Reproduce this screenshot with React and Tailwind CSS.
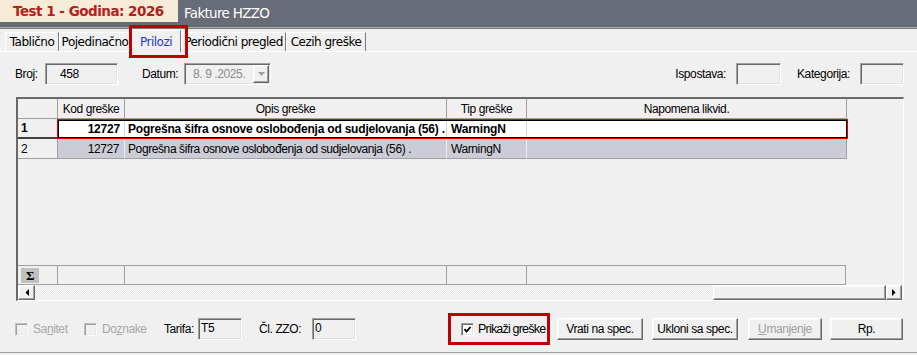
const sunken =
  'border border-t-[#a0a0a0] border-l-[#a0a0a0] border-b-white border-r-white shadow-[inset_1px_1px_0_#696969,inset_-1px_-1px_0_#e3e3e3]';
const raised =
  'border border-t-white border-l-white border-b-[#696969] border-r-[#696969] shadow-[inset_-1px_-1px_0_#a0a0a0,inset_1px_1px_0_#f8f8f8]';

const OPIS = 'Pogrešna šifra osnove oslobođenja od sudjelovanja (56) .';

function CheckBox({ checked, disabled }) {
  return (
    <span
      className={`w-[13px] h-[13px] shrink-0 flex items-center justify-center ${sunken} ${
        disabled ? 'bg-[#f0f0f0] opacity-60' : 'bg-white'
      }`}
    >
      {checked && (
        <svg width="9" height="9" viewBox="0 0 9 9">
          <polyline points="1.5,4 3.5,6.5 7.5,2" fill="none" stroke="#000" strokeWidth="1.8" />
        </svg>
      )}
    </span>
  );
}

function Tab({ w, children }) {
  return (
    <div
      className={`${w} h-[19px] border-t border-l border-r border-t-white border-l-white border-r-[#7a7a7a] flex items-center justify-center whitespace-nowrap`}
    >
      {children}
    </div>
  );
}

function Btn({ w, ml, disabled, children }) {
  return (
    <div
      className={`${w} ${ml} h-[22px] bg-[#f0f0f0] ${raised} flex items-center justify-center ${
        disabled ? 'text-[#a0a0a0]' : 'text-black'
      }`}
    >
      {children}
    </div>
  );
}

function Arrow({ dir }) {
  return (
    <svg width="4" height="7" viewBox="0 0 4 7">
      {dir === 'left' ? <polygon points="4,0 4,7 0.5,3.5" fill="#000" /> : <polygon points="0,0 0,7 3.5,3.5" fill="#000" />}
    </svg>
  );
}

export default function App() {
  return (
    <div className="w-[917px] h-[355px] bg-[#f0f0f0] overflow-hidden text-black">
      {/* Title bar */}
      <div className="h-[27px] bg-[#676c78] flex items-start">
        <div className="w-[178px] h-[22px] bg-[#f6ebd7] pl-[13px] flex items-center font-['DejaVu_Sans',sans-serif] font-bold text-[13.5px] tracking-[-0.5px] text-[#b5211b]">
          Test 1 - Godina: 2026
        </div>
        <div className="h-[26px] pl-[6px] flex items-center font-['DejaVu_Sans',sans-serif] text-[13.5px] tracking-[-0.7px] text-white">
          Fakture HZZO
        </div>
      </div>
      <div className="h-px bg-[#a9a9a9]" />
      <div className="h-px bg-[#7d7d7d]" />

      {/* Tabs */}
      <div className="h-[23px] flex items-end pl-[5px] border-b border-white font-['DejaVu_Sans',sans-serif] text-[12px] tracking-[-0.5px]">
        <Tab w="w-[54px]">Tablično</Tab>
        <Tab w="w-[72px]">Pojedinačno</Tab>
        <div className="relative z-10 w-[50px] h-[22px] -mb-px bg-[#f0f0f0] border-t border-l border-r border-t-white border-l-white border-r-[#7a7a7a] flex items-start justify-center pt-[2px] text-[#2a36c8]">
          Prilozi
          <div className="absolute left-[-3px] top-[-6px] w-[59px] h-[33px] border-[3px] border-[#c00000]" />
        </div>
        <Tab w="w-[105px]">Periodični pregled</Tab>
        <Tab w="w-[80px]">Cezih greške</Tab>
      </div>

      {/* Panel */}
      <div className="h-[301px] border-b border-[#a0a0a0] flex flex-col font-['Liberation_Sans',Arial,sans-serif] text-[12px] tracking-[-0.4px]">
        {/* Top fields */}
        <div className="mt-[11px] h-[22px] flex items-center">
          <span className="ml-[15px] w-[30px]">Broj:</span>
          <div className={`w-[73px] h-[22px] ${sunken} pl-[14px] flex items-center`}>458</div>
          <span className="ml-[24px] w-[42px]">Datum:</span>
          <div className={`w-[87px] h-[22px] ${sunken} pl-[8px] pr-[1px] flex items-center justify-between text-[#8a8a8a]`}>
            <span>8. 9 .2025.</span>
            <div className={`w-[16px] h-[18px] bg-[#f0f0f0] ${raised} flex items-center justify-center`}>
              <svg width="7" height="4" viewBox="0 0 7 4">
                <polygon points="0,0 7,0 3.5,4" fill="#a0a0a0" />
              </svg>
            </div>
          </div>
          <div className="flex-1" />
          <span>Ispostava:</span>
          <div className={`ml-[10px] w-[45px] h-[22px] ${sunken}`} />
          <span className="ml-[16px]">Kategorija:</span>
          <div className={`ml-[10px] w-[44px] h-[22px] mr-[13px] ${sunken}`} />
        </div>

        {/* Grid */}
        <div className="mt-[12px] ml-[16px] w-[888px] h-[204px] border-t-2 border-l-2 border-t-[#696969] border-l-[#696969] border-r border-b border-r-white border-b-white flex flex-col">
          {/* Header */}
          <div className="flex h-[20px] shrink-0">
            <div className="w-[40px] border-r border-b border-[#a0a0a0]" />
            <div className="w-[67px] border-r border-b border-[#a0a0a0] flex items-center justify-center">Kod greške</div>
            <div className="w-[322px] border-r border-b border-[#a0a0a0] flex items-center justify-center">Opis greške</div>
            <div className="w-[80px] border-r border-b border-[#a0a0a0] flex items-center justify-center">Tip greške</div>
            <div className="w-[320px] border-r border-b border-[#a0a0a0] flex items-center justify-center">Napomena likvid.</div>
          </div>

          {/* Row 1 (selected) */}
          <div className="flex h-[20px] shrink-0">
            <div className="w-[39px] border-b-2 border-b-[#404040] font-bold pl-[3px] flex items-center">1</div>
            <div className="w-[791px] border border-[#e00000]">
              <div className="h-full border border-black bg-white flex font-bold tracking-[-0.2px]">
                <div className="w-[66px] border-r border-[#d4d4d4] flex items-center justify-end pr-[4px]">12727</div>
                <div className="w-[322px] border-r border-[#d4d4d4] flex items-center pl-[3px] overflow-hidden whitespace-nowrap">
                  {OPIS}
                </div>
                <div className="w-[80px] border-r border-[#d4d4d4] flex items-center pl-[4px]">WarningN</div>
                <div className="flex-1" />
              </div>
            </div>
          </div>

          {/* Row 2 */}
          <div className="flex h-[20px] shrink-0">
            <div className="w-[40px] border-r border-b border-[#a0a0a0] pl-[3px] flex items-center">2</div>
            <div className="w-[67px] bg-[#cbccd5] border-r border-r-[#ececf0] border-b border-b-[#a0a0a0] flex items-center justify-end pr-[5px]">
              12727
            </div>
            <div className="w-[322px] bg-[#cbccd5] border-r border-r-[#ececf0] border-b border-b-[#a0a0a0] flex items-center pl-[3px] overflow-hidden whitespace-nowrap">
              {OPIS}
            </div>
            <div className="w-[80px] bg-[#cbccd5] border-r border-r-[#ececf0] border-b border-b-[#a0a0a0] flex items-center pl-[4px]">
              WarningN
            </div>
            <div className="w-[320px] bg-[#cbccd5] border-r border-b border-[#a0a0a0]" />
          </div>

          <div className="flex-1" />

          {/* Footer (sum) row */}
          <div className="flex h-[20px] shrink-0">
            <div className="w-[40px] border-t border-r border-b border-[#a0a0a0] flex items-center pl-[3px]">
              <div className="w-[18px] h-[15px] bg-[#c0c0c0] flex items-center justify-center font-['Liberation_Serif',serif] text-[13px] font-bold leading-none">
                Σ
              </div>
            </div>
            <div className="w-[67px] border-t border-r border-b border-[#a0a0a0]" />
            <div className="w-[322px] border-t border-r border-b border-[#a0a0a0]" />
            <div className="w-[80px] border-t border-r border-b border-[#a0a0a0]" />
            <div className="w-[319px] border-t border-r border-b border-[#a0a0a0]" />
          </div>

          {/* Horizontal scrollbar */}
          <div className="flex h-[15px] shrink-0 pr-[1px]">
            <div className={`w-[17px] bg-[#f0f0f0] ${raised} flex items-center justify-center`}>
              <Arrow dir="left" />
            </div>
            <div className="flex-1 bg-[image:repeating-conic-gradient(#e6e6e6_0_25%,#fbfbfb_0_50%)] bg-[length:2px_2px]" />
            <div className={`w-[173px] bg-[#f0f0f0] ${raised}`} />
            <div className={`w-[16px] bg-[#f0f0f0] ${raised} flex items-center justify-center`}>
              <Arrow dir="right" />
            </div>
          </div>
        </div>

        {/* Bottom controls */}
        <div className="mt-[12px] h-[32px] flex items-center">
          <div className="ml-[15px] w-[69px] flex items-center text-[#a6a6a6]">
            <CheckBox disabled />
            <span className="ml-[5px]">
              Sa<span className="underline">n</span>itet
            </span>
          </div>
          <div className="w-[80px] flex items-center text-[#a6a6a6]">
            <CheckBox disabled />
            <span className="ml-[5px]">
              Do<span className="underline">z</span>nake
            </span>
          </div>
          <span className="w-[34px]">Tarifa:</span>
          <div className={`w-[44px] h-[22px] ${sunken} pl-[2px] pt-[2px] leading-[14px]`}>T5</div>
          <span className="ml-[17px] w-[53px]">Čl. ZZO:</span>
          <div className={`w-[44px] h-[22px] ${sunken} pl-[2px] pt-[2px] leading-[14px]`}>0</div>

          <div className="ml-[92px] w-[102px] h-[32px] border-[3px] border-[#c00000] flex items-center">
            <span className="ml-[10px]">
              <CheckBox checked />
            </span>
            <span className="ml-[4px] text-[12.5px] tracking-[-0.8px] whitespace-nowrap">Prikaži greške</span>
          </div>

          <Btn w="w-[86px]" ml="ml-[7px]">Vrati na spec.</Btn>
          <Btn w="w-[86px]" ml="ml-[9px]">Ukloni sa spec.</Btn>
          <Btn w="w-[74px]" ml="ml-[10px]" disabled>
            <span className="underline">U</span>manjenje
          </Btn>
          <Btn w="w-[73px]" ml="ml-[8px]">Rp.</Btn>
        </div>
      </div>
    </div>
  );
}
